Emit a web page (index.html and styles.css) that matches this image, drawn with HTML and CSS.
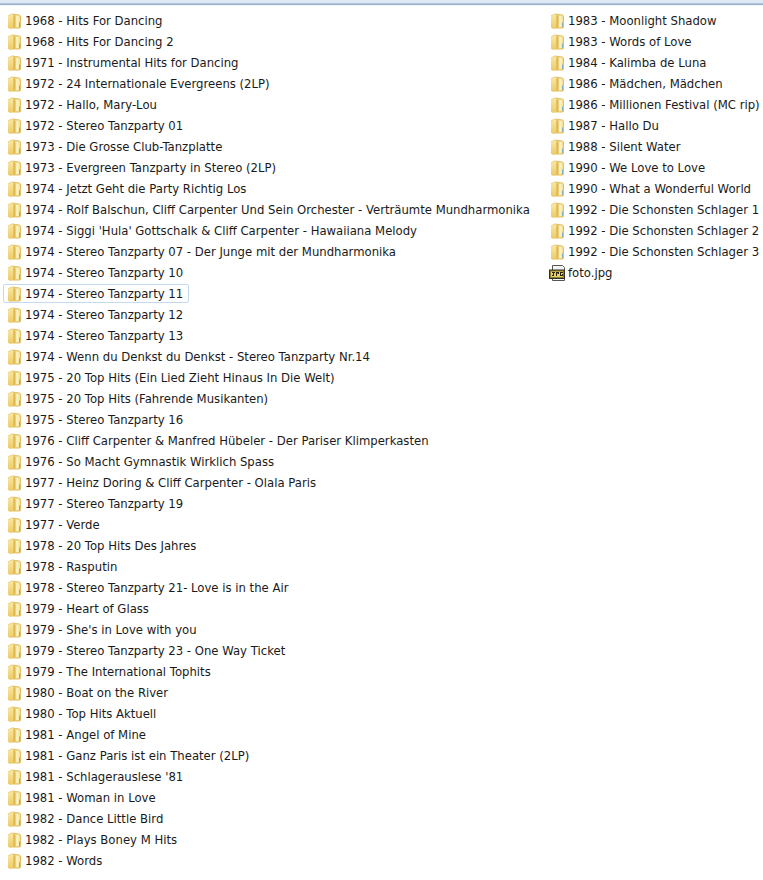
FILE: index.html
```html
<!DOCTYPE html>
<html lang="en">
<head>
<meta charset="utf-8">
<title>Folder listing</title>
<link rel="stylesheet" href="styles.css">
</head>
<body>
<svg class="defs" width="0" height="0" aria-hidden="true">
  <defs>
    <linearGradient id="fg" x1="0" y1="0" x2="1" y2="0">
      <stop offset="0" stop-color="#f5dd96"/>
      <stop offset="0.5" stop-color="#fcf3c8"/>
      <stop offset="1" stop-color="#f3dc8c"/>
    </linearGradient>
    <linearGradient id="fl" x1="0" y1="0" x2="0" y2="1">
      <stop offset="0" stop-color="#f9e8a6"/>
      <stop offset="1" stop-color="#edcb66"/>
    </linearGradient>
    <symbol id="folder" viewBox="-0.5 0 16 16">
      <path d="M1.5 2.5 L5.5 .5 L13 1.5 L14.5 3 L14.5 14.5 L13 15.5 L3 15.5 L1.5 14.5Z" fill="#e2c266"/>
      <path d="M8 2.5 L13.5 2.5 L13.5 14 L8 14.5Z" fill="url(#fg)"/>
      <path d="M1.5 3 L6 1 L7 2 L7 15 L3 15.5 L1.5 14.5Z" fill="url(#fl)"/>
      <path d="M7 2 L9 3.5 L9 14.5 L7 15Z" fill="#e0b84e"/>
      <path d="M12.5 9.5 L13.5 9.5 L13.5 14 L12.5 14Z" fill="#86aebb"/>
    </symbol>
    <symbol id="jpg" viewBox="0 0 16 16">
      <path d="M3.5 .5 H13.5 L15.5 2.5 V15.5 H3.5Z" fill="#f4f4f4" stroke="#555"/>
      <rect x=".5" y="5" width="15" height="8.5" fill="#8a7a20" stroke="#333"/>
      <rect x="2" y="6.5" width="12" height="5.5" fill="#e8d070"/>
      <path d="M3 7h3v1H5v3H3v-1h1V8H3zM7 7h3v2H8v2H7zM8 8v.5h1V8zM11 7h3v1h-2v2h1V9h1v2h-3z" fill="#2a2408"/>
    </symbol>
  </defs>
</svg>
<div class="topbar"></div>
<main class="listing">
  <ul class="column column-left">
    <li class="item"><svg class="icon"><use href="#folder"/></svg><span class="name">1968 - Hits For Dancing</span></li>
    <li class="item"><svg class="icon"><use href="#folder"/></svg><span class="name">1968 - Hits For Dancing 2</span></li>
    <li class="item"><svg class="icon"><use href="#folder"/></svg><span class="name">1971 - Instrumental Hits for Dancing</span></li>
    <li class="item"><svg class="icon"><use href="#folder"/></svg><span class="name">1972 - 24 Internationale Evergreens (2LP)</span></li>
    <li class="item"><svg class="icon"><use href="#folder"/></svg><span class="name">1972 - Hallo, Mary-Lou</span></li>
    <li class="item"><svg class="icon"><use href="#folder"/></svg><span class="name">1972 - Stereo Tanzparty 01</span></li>
    <li class="item"><svg class="icon"><use href="#folder"/></svg><span class="name">1973 - Die Grosse Club-Tanzplatte</span></li>
    <li class="item"><svg class="icon"><use href="#folder"/></svg><span class="name">1973 - Evergreen Tanzparty in Stereo (2LP)</span></li>
    <li class="item"><svg class="icon"><use href="#folder"/></svg><span class="name">1974 - Jetzt Geht die Party Richtig Los</span></li>
    <li class="item"><svg class="icon"><use href="#folder"/></svg><span class="name">1974 - Rolf Balschun, Cliff Carpenter Und Sein Orchester - Verträumte Mundharmonika</span></li>
    <li class="item"><svg class="icon"><use href="#folder"/></svg><span class="name">1974 - Siggi 'Hula' Gottschalk &amp; Cliff Carpenter - Hawaiiana Melody</span></li>
    <li class="item"><svg class="icon"><use href="#folder"/></svg><span class="name">1974 - Stereo Tanzparty 07 - Der Junge mit der Mundharmonika</span></li>
    <li class="item"><svg class="icon"><use href="#folder"/></svg><span class="name">1974 - Stereo Tanzparty 10</span></li>
    <li class="item item-focus"><svg class="icon"><use href="#folder"/></svg><span class="name">1974 - Stereo Tanzparty 11</span></li>
    <li class="item"><svg class="icon"><use href="#folder"/></svg><span class="name">1974 - Stereo Tanzparty 12</span></li>
    <li class="item"><svg class="icon"><use href="#folder"/></svg><span class="name">1974 - Stereo Tanzparty 13</span></li>
    <li class="item"><svg class="icon"><use href="#folder"/></svg><span class="name">1974 - Wenn du Denkst du Denkst - Stereo Tanzparty Nr.14</span></li>
    <li class="item"><svg class="icon"><use href="#folder"/></svg><span class="name">1975 - 20 Top Hits (Ein Lied Zieht Hinaus In Die Welt)</span></li>
    <li class="item"><svg class="icon"><use href="#folder"/></svg><span class="name">1975 - 20 Top Hits (Fahrende Musikanten)</span></li>
    <li class="item"><svg class="icon"><use href="#folder"/></svg><span class="name">1975 - Stereo Tanzparty 16</span></li>
    <li class="item"><svg class="icon"><use href="#folder"/></svg><span class="name">1976 - Cliff Carpenter &amp; Manfred Hübeler - Der Pariser Klimperkasten</span></li>
    <li class="item"><svg class="icon"><use href="#folder"/></svg><span class="name">1976 - So Macht Gymnastik Wirklich Spass</span></li>
    <li class="item"><svg class="icon"><use href="#folder"/></svg><span class="name">1977 - Heinz Doring &amp; Cliff Carpenter - Olala Paris</span></li>
    <li class="item"><svg class="icon"><use href="#folder"/></svg><span class="name">1977 - Stereo Tanzparty 19</span></li>
    <li class="item"><svg class="icon"><use href="#folder"/></svg><span class="name">1977 - Verde</span></li>
    <li class="item"><svg class="icon"><use href="#folder"/></svg><span class="name">1978 - 20 Top Hits Des Jahres</span></li>
    <li class="item"><svg class="icon"><use href="#folder"/></svg><span class="name">1978 - Rasputin</span></li>
    <li class="item"><svg class="icon"><use href="#folder"/></svg><span class="name">1978 - Stereo Tanzparty 21- Love is in the Air</span></li>
    <li class="item"><svg class="icon"><use href="#folder"/></svg><span class="name">1979 - Heart of Glass</span></li>
    <li class="item"><svg class="icon"><use href="#folder"/></svg><span class="name">1979 - She's in Love with you</span></li>
    <li class="item"><svg class="icon"><use href="#folder"/></svg><span class="name">1979 - Stereo Tanzparty 23 - One Way Ticket</span></li>
    <li class="item"><svg class="icon"><use href="#folder"/></svg><span class="name">1979 - The International Tophits</span></li>
    <li class="item"><svg class="icon"><use href="#folder"/></svg><span class="name">1980 - Boat on the River</span></li>
    <li class="item"><svg class="icon"><use href="#folder"/></svg><span class="name">1980 - Top Hits Aktuell</span></li>
    <li class="item"><svg class="icon"><use href="#folder"/></svg><span class="name">1981 - Angel of Mine</span></li>
    <li class="item"><svg class="icon"><use href="#folder"/></svg><span class="name">1981 - Ganz Paris ist ein Theater (2LP)</span></li>
    <li class="item"><svg class="icon"><use href="#folder"/></svg><span class="name">1981 - Schlagerauslese '81</span></li>
    <li class="item"><svg class="icon"><use href="#folder"/></svg><span class="name">1981 - Woman in Love</span></li>
    <li class="item"><svg class="icon"><use href="#folder"/></svg><span class="name">1982 - Dance Little Bird</span></li>
    <li class="item"><svg class="icon"><use href="#folder"/></svg><span class="name">1982 - Plays Boney M Hits</span></li>
    <li class="item"><svg class="icon"><use href="#folder"/></svg><span class="name">1982 - Words</span></li>
  </ul>
  <ul class="column column-right">
    <li class="item"><svg class="icon"><use href="#folder"/></svg><span class="name">1983 - Moonlight Shadow</span></li>
    <li class="item"><svg class="icon"><use href="#folder"/></svg><span class="name">1983 - Words of Love</span></li>
    <li class="item"><svg class="icon"><use href="#folder"/></svg><span class="name">1984 - Kalimba de Luna</span></li>
    <li class="item"><svg class="icon"><use href="#folder"/></svg><span class="name">1986 - Mädchen, Mädchen</span></li>
    <li class="item"><svg class="icon"><use href="#folder"/></svg><span class="name">1986 - Millionen Festival (MC rip)</span></li>
    <li class="item"><svg class="icon"><use href="#folder"/></svg><span class="name">1987 - Hallo Du</span></li>
    <li class="item"><svg class="icon"><use href="#folder"/></svg><span class="name">1988 - Silent Water</span></li>
    <li class="item"><svg class="icon"><use href="#folder"/></svg><span class="name">1990 - We Love to Love</span></li>
    <li class="item"><svg class="icon"><use href="#folder"/></svg><span class="name">1990 - What a Wonderful World</span></li>
    <li class="item"><svg class="icon"><use href="#folder"/></svg><span class="name">1992 - Die Schonsten Schlager 1</span></li>
    <li class="item"><svg class="icon"><use href="#folder"/></svg><span class="name">1992 - Die Schonsten Schlager 2</span></li>
    <li class="item"><svg class="icon"><use href="#folder"/></svg><span class="name">1992 - Die Schonsten Schlager 3</span></li>
    <li class="item"><svg class="icon"><use href="#jpg"/></svg><span class="name">foto.jpg</span></li>
  </ul>
</main>
</body>
</html>
```
FILE: styles.css
```css
html, body {
  margin: 0;
  padding: 0;
  background: #fff;
  height: 880px;
  overflow: hidden;
}
body {
  font-family: "DejaVu Sans", sans-serif;
  font-size: 11.67px;
  color: #1a1a1a;
}
.defs {
  position: absolute;
}
.topbar {
  height: 6px;
  background: linear-gradient(to bottom, #dfe9f4 0, #dfe9f4 3px, #c3d2e2 3px, #9fb4cb 4px, #9fb4cb 5px, #eef3f8 5px);
}
.listing {
  display: flex;
  padding: 5px 0 0 3px;
}
.column {
  list-style: none;
  margin: 0;
  padding: 0;
}
.column-left {
  flex: 0 0 543px;
}
.column-right {
  flex: none;
}
.item {
  display: flex;
  align-items: center;
  height: 19px;
  margin-bottom: 2px;
  width: max-content;
  padding: 0 5px 0 2px;
  border: 1px solid transparent;
  box-sizing: border-box;
  white-space: nowrap;
}
.item-focus {
  border-color: #c4daf0;
  border-radius: 2px;
}
.icon {
  width: 16px;
  height: 16px;
  margin-right: 3px;
  flex: none;
}
```
